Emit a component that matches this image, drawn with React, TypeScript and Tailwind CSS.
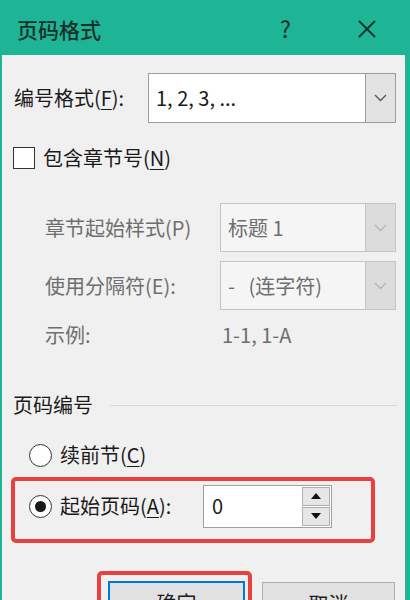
import React from "react";

const font = { fontFamily: '"Noto Sans CJK SC", "Noto Sans", sans-serif' };

function Chevron({ disabled }: { disabled?: boolean }) {
  return (
    <svg width="13" height="8" viewBox="0 0 13 8">
      <path d="M1 1 L6.5 6.5 L12 1" fill="none" stroke={disabled ? "#b4b4b4" : "#555"} strokeWidth="1.3" />
    </svg>
  );
}

function Combo({ text, width, disabled }: { text: string; width: string; disabled?: boolean }) {
  return (
    <div className={`flex h-full ${width} border ${disabled ? "border-[#c4c4c4] bg-[#f5f5f5]" : "border-[#9c9c9c] bg-white"}`}>
      <div className={`flex-1 flex items-center pl-[7px] text-[20px] whitespace-pre ${disabled ? "text-[#6e6e6e]" : "text-[#1a1a1a]"}`}>{text}</div>
      <div className={`w-[30px] flex items-center justify-center border-l ${disabled ? "border-[#c4c4c4] bg-[#dcdcdc]" : "border-[#9c9c9c] bg-[#e3e3e3]"}`}>
        <Chevron disabled={disabled} />
      </div>
    </div>
  );
}

function U({ c }: { c: string }) {
  return <span className="underline underline-offset-[3px] decoration-[1px]">{c}</span>;
}

export default function App() {
  return (
    <div className="w-[410px] h-[600px] overflow-hidden bg-[#1eb496] flex flex-col" style={font}>
      <div className="h-[55px] shrink-0 flex items-center">
        <div className="ml-[17px] text-[21px] font-medium text-[#17302a] leading-none mt-[4px]">页码格式</div>
        <div className="ml-auto text-[23px] text-[#17302a] leading-none mt-[2px] mr-[66px]">?</div>
        <svg width="20" height="20" viewBox="0 0 20 20" className="mr-[33px] mt-[2px]">
          <path d="M2 2 L18 18 M18 2 L2 18" stroke="#17302a" strokeWidth="1.8" />
        </svg>
      </div>
      <div className="flex-1 ml-[2px] mr-[5px] bg-[#f0f0f0] flex flex-col text-[20px] text-[#1a1a1a]">
        <div className="mt-[18px] h-[50px] flex items-center">
          <div className="pl-[12px] w-[146px]">编号格式(<U c="F" />):</div>
          <Combo text="1, 2, 3, ..." width="w-[248px]" />
        </div>
        <div className="mt-[22px] h-[26px] flex items-center pl-[11px]">
          <div className="w-[22px] h-[22px] border-[1.5px] border-[#333] bg-white" />
          <div className="ml-[8px]">包含章节号(<U c="N" />)</div>
        </div>
        <div className="mt-[32px] h-[49px] flex items-center text-[#6e6e6e]">
          <div className="pl-[43px] w-[218px]">章节起始样式(P)</div>
          <Combo text="标题 1" width="w-[176px]" disabled />
        </div>
        <div className="mt-[9px] h-[49px] flex items-center text-[#6e6e6e]">
          <div className="pl-[43px] w-[218px]">使用分隔符(E):</div>
          <Combo text="-   (连字符)" width="w-[176px]" disabled />
        </div>
        <div className="mt-[10px] h-[30px] flex items-center text-[#6e6e6e]">
          <div className="pl-[43px] w-[220px]">示例:</div>
          <div>1-1, 1-A</div>
        </div>
        <div className="mt-[40px] h-[30px] flex items-center pl-[11px]">
          <div>页码编号</div>
          <div className="flex-1 h-px bg-[#d8d8d8] ml-[17px] mr-[8px]" />
        </div>
        <div className="mt-[21px] h-[28px] flex items-center pl-[27px]">
          <div className="w-[23px] h-[23px] rounded-full border-[1.5px] border-[#333] bg-white" />
          <div className="ml-[8px]">续前节(<U c="C" />)</div>
        </div>
        <div className="mt-[8px] ml-[9px] w-[364px] h-[66px] border-[4px] border-[#e8403f] rounded-[5px] flex items-center pb-[8px] pl-[14px]">
          <div className="w-[23px] h-[23px] rounded-full border-[1.5px] border-[#333] bg-white flex items-center justify-center">
            <div className="w-[11px] h-[11px] rounded-full bg-[#1a1a1a]" />
          </div>
          <div className="ml-[8px] w-[143px]">起始页码(<U c="A" />):</div>
          <div className="w-[129px] h-[43px] border border-[#a0a0a0] bg-white flex items-center">
            <div className="flex-1 pl-[8px] text-[20px]">0</div>
            <div className="w-[28px] h-[39px] mr-[1px] flex flex-col gap-[1px]">
              <div className="flex-1 bg-[#e6e6e6] border border-[#b0b0b0] flex items-center justify-center">
                <svg width="10" height="6" viewBox="0 0 10 6"><path d="M0 6 L5 0 L10 6 Z" fill="#111" /></svg>
              </div>
              <div className="flex-1 bg-[#e6e6e6] border border-[#b0b0b0] flex items-center justify-center">
                <svg width="10" height="6" viewBox="0 0 10 6"><path d="M0 0 L10 0 L5 6 Z" fill="#111" /></svg>
              </div>
            </div>
          </div>
        </div>
        <div className="mt-[28px] flex items-start">
          <div className="ml-[95px] w-[155px] h-[70px] border-[4px] border-[#e8403f] rounded-[5px] pl-[7px] pt-[6px]">
            <div className="w-[137px] h-[44px] border-2 border-[#0078d7] bg-[#e1e1e1] flex items-center justify-center">确定</div>
          </div>
          <div className="ml-[10px] mt-[11px] w-[133px] h-[44px] border border-[#adadad] bg-[#e1e1e1] flex items-center justify-center">取消</div>
        </div>
      </div>
    </div>
  );
}
